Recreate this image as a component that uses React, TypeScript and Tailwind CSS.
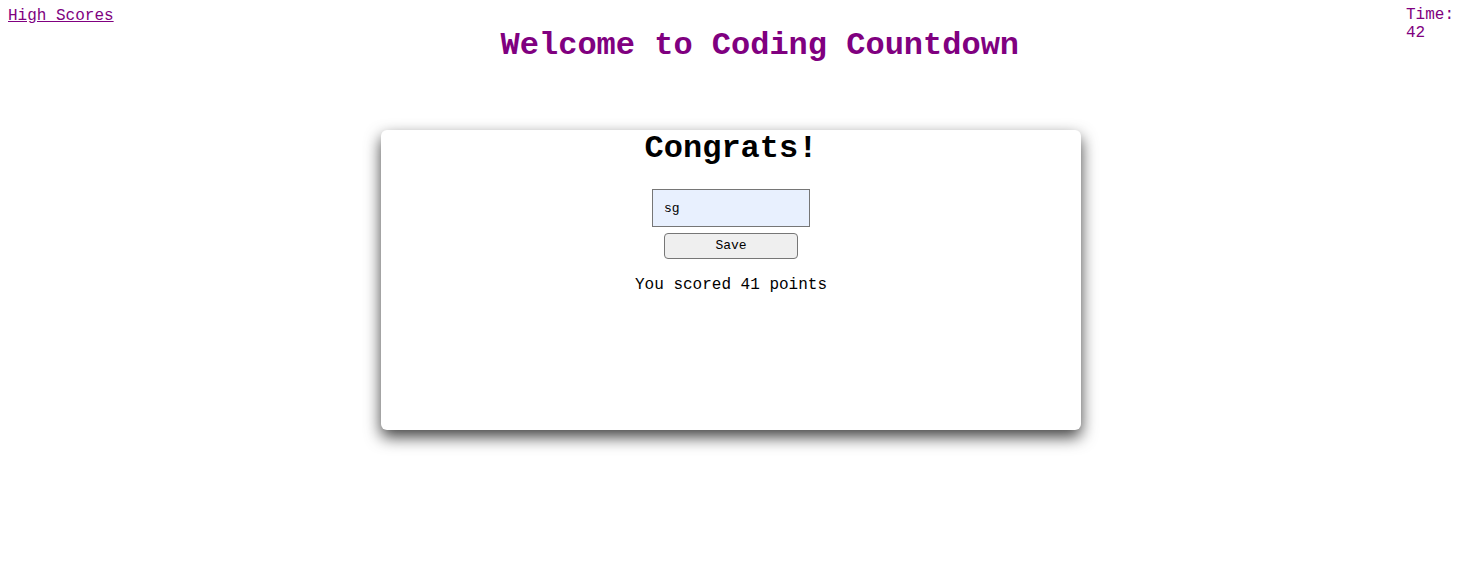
export default function App() {
  return (
    <div
      className="min-h-[578px] bg-white p-2 text-black"
      style={{ fontFamily: '"Liberation Mono", "Courier New", monospace' }}
    >
      {/* Header */}
      <div className="flex items-start justify-between">
        <a href="#" className="text-base leading-[16px] text-[#800080] underline">
          High Scores
        </a>
        <h1 className="mt-[20px] text-[32px] font-bold leading-[36px] text-[#800080]">
          Welcome to Coding Countdown
        </h1>
        <div className="-mt-[2px] w-[44px] text-base leading-[18px] text-[#800080]">
          Time: 42
        </div>
      </div>

      {/* Card */}
      <div className="mt-[66px] flex justify-center pl-1">
        <div className="flex h-[300px] w-[700px] flex-col items-center rounded-md bg-white shadow-[0_7px_16px_rgba(0,0,0,0.75)]">
          <h2 className="mt-[1px] text-[32px] font-bold leading-[36px]">Congrats!</h2>
          <input
            defaultValue="sg"
            className="mt-[22px] h-[38px] w-[158px] border border-[#767676] bg-[#e8f0fe] px-[11px] text-[13px] outline-none"
          />
          <button className="mt-[6px] h-[26px] w-[134px] rounded-[4px] border border-[#767676] bg-[#efefef] text-[13px]">
            Save
          </button>
          <p className="mt-[17px] text-base leading-[18px]">You scored 41 points</p>
        </div>
      </div>
    </div>
  )
}
